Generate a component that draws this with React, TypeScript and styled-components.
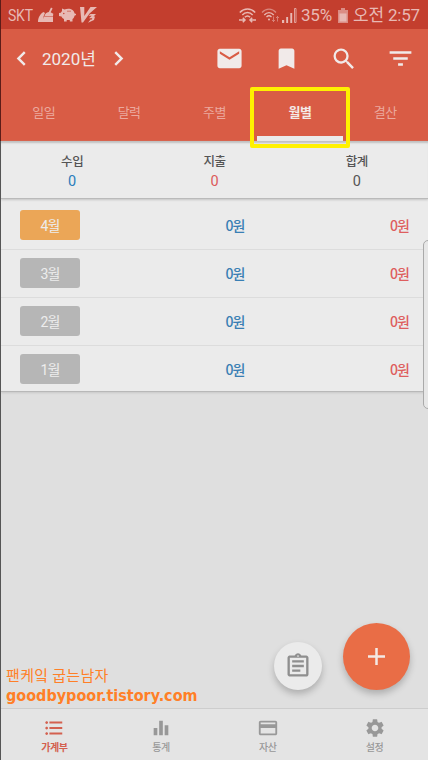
import React from "react";
import styled, { createGlobalStyle } from "styled-components";
import {
  MdMail, MdBookmark, MdSearch, MdFilterList, MdChevronLeft, MdChevronRight,
  MdFormatListBulleted, MdEqualizer, MdCreditCard, MdSettings, MdOutlineAssignment,
} from "react-icons/md";

const Global = createGlobalStyle`
  *, *::before, *::after { box-sizing: border-box; }
  body { margin: 0; background: #e0e0e0; }
`;

const Screen = styled.div`
  position: relative;
  width: 428px;
  height: 760px;
  overflow: hidden;
  display: flex;
  flex-direction: column;
  padding-left: 1px;
  background: #dfdfdf;
  font-family: Roboto, "Noto Sans CJK KR", sans-serif;
`;

const LeftEdge = styled.div`
  position: absolute;
  inset: 0 auto 0 0;
  width: 1px;
  background: linear-gradient(#5c1c18 0 141px, #555 141px);
  z-index: 5;
`;

const StatusBar = styled.header`
  flex: none;
  height: 29px;
  display: flex;
  justify-content: space-between;
  padding: 0 9px 0 7px;
  background: #c33e2e;
  color: #e8b9b4;
`;

const StatusGroup = styled.div`
  display: flex;
  align-items: center;
`;

const StatusText = styled.span<{ $width: number; $gap: number }>`
  font-size: 17px;
  line-height: 30px;
  font-weight: 400;
  width: ${(p) => p.$width}px;
  margin-left: ${(p) => p.$gap}px;
  letter-spacing: -0.2px;
  white-space: nowrap;
`;

const Condensed = styled.span`
  display: inline-block;
  transform: scaleX(0.82);
  transform-origin: left;
`;

const Glyph = styled.svg<{ $gap: number }>`
  display: block;
  flex: none;
  margin-left: ${(p) => p.$gap}px;
  margin-top: 1px;
`;

const AppBar = styled.div`
  flex: none;
  height: 59px;
  display: flex;
  justify-content: space-between;
  align-items: center;
  padding: 0 15px 0 6px;
  background: #d95c45;
  color: #f1eae9;
`;

const YearPicker = styled.div`
  display: flex;
  align-items: center;
  svg { display: block; }
`;

const Year = styled.span`
  width: 54px;
  margin: 1px 8px 0 6px;
  font-size: 17px;
  line-height: 24px;
  white-space: nowrap;
`;

const Actions = styled.div`
  display: grid;
  grid-template-columns: repeat(4, 57px);
  justify-items: center;
  align-items: center;
  margin-right: -16px;
  svg { display: block; }
`;

const Tabs = styled.nav`
  flex: none;
  height: 53px;
  display: grid;
  grid-template-columns: repeat(5, 1fr);
  background: #d95c45;
  position: relative;
`;

const Tab = styled.div<{ $active?: boolean }>`
  display: flex;
  flex-direction: column;
  justify-content: space-between;
  padding-top: 14px;
  text-align: center;
  font-size: 13px;
  line-height: 22px;
  letter-spacing: -0.5px;
  font-weight: ${(p) => (p.$active ? 700 : 400)};
  color: ${(p) => (p.$active ? "#f4e9e7" : "#eba99e")};
`;

const Underline = styled.i`
  height: 5px;
  background: #ebebeb;
`;

const Highlight = styled.div`
  position: absolute;
  left: 249px;
  top: -1px;
  width: 100px;
  height: 61px;
  border: 4px solid #fff100;
  border-radius: 2px;
  z-index: 3;
`;

const Summary = styled.section`
  flex: none;
  height: 58px;
  display: grid;
  grid-template-columns: repeat(3, 1fr);
  padding-top: 11px;
  background: #ebebeb;
  border-bottom: 1px solid #bababa;
  box-shadow: inset 0 3px 2px -1px #c0c0c0, 0 1px 2px #c4c4c4;
  z-index: 1;
`;

const Total = styled.div<{ $color: string }>`
  display: flex;
  flex-direction: column;
  align-items: center;
  b { font-size: 12.5px; line-height: 20px; font-weight: 500; color: #555; letter-spacing: -0.4px; }
  span { font-size: 14.5px; line-height: 20px; color: ${(p) => p.$color}; }
`;

const Months = styled.section`
  flex: none;
  background: #ebebeb;
  padding-top: 3px;
  border-bottom: 1px solid #b8b8b8;
  box-shadow: 0 1px 2px #c8c8c8;
`;

const MonthRow = styled.div`
  height: 48px;
  display: grid;
  grid-template-columns: 60px 1fr 1fr;
  align-items: start;
  padding: 8px 19px 0 19px;
  border-bottom: 1px solid #dcdcdc;
  &:last-child { height: 45px; border-bottom: 0; }
`;

const Chip = styled.div<{ $current: boolean }>`
  height: 30px;
  border-radius: 3px;
  background: ${(p) => (p.$current ? "#eba657" : "#b6b6b6")};
  color: #ededed;
  text-align: center;
  font-size: 14px;
  line-height: 32px;
  letter-spacing: -0.8px;
`;

const Amount = styled.div<{ $color: string }>`
  text-align: right;
  font-family: "Noto Sans CJK KR", sans-serif;
  font-size: 14px;
  line-height: 30px;
  font-weight: 500;
  letter-spacing: -0.9px;
  color: ${(p) => p.$color};
`;

const EdgeHandle = styled.div`
  position: absolute;
  left: 423px;
  top: 240px;
  width: 10px;
  height: 169px;
  border: 1px solid #aaa;
  border-radius: 5px;
  background: #e7e7e7;
  z-index: 4;
`;

const Fab = styled.button<{ $x: number; $y: number; $size: number; $bg: string; $fg: string }>`
  position: absolute;
  left: ${(p) => p.$x}px;
  top: ${(p) => p.$y}px;
  width: ${(p) => p.$size}px;
  height: ${(p) => p.$size}px;
  display: grid;
  place-items: center;
  padding: 0;
  border: 0;
  border-radius: 50%;
  background: ${(p) => p.$bg};
  color: ${(p) => p.$fg};
  box-shadow: 0 4px 7px rgba(0, 0, 0, 0.22);
`;

const Watermark = styled.div`
  margin-top: auto;
  padding: 0 0 1px 5px;
  color: #ff7f27;
  white-space: nowrap;
  p { margin: 0; font: 400 15px/20px "Noto Sans CJK KR", sans-serif; letter-spacing: 0.35px; }
  strong { display: block; font: 700 16px/22px "DejaVu Sans", sans-serif; font-stretch: condensed; }
`;

const BottomNav = styled.nav`
  flex: none;
  height: 52px;
  display: grid;
  grid-template-columns: repeat(4, 1fr);
  background: #e4e4e4;
  border-top: 1px solid #cdcdcd;
`;

const NavItem = styled.div<{ $active?: boolean }>`
  display: flex;
  flex-direction: column;
  align-items: center;
  padding-top: 8px;
  color: ${(p) => (p.$active ? "#d3604f" : "#989898")};
  font-size: 10px;
  line-height: 15px;
  font-weight: ${(p) => (p.$active ? 700 : 500)};
  letter-spacing: -0.4px;
  svg { display: block; margin-bottom: 1px; }
`;

const months = ["4월", "3월", "2월", "1월"];

export default function App() {
  return (
    <>
      <Global />
      <Screen>
        <LeftEdge />
        <StatusBar>
          <StatusGroup>
            <StatusText $width={26} $gap={0}><Condensed>SKT</Condensed></StatusText>
            <Glyph $gap={4} width="16" height="16" viewBox="0 0 16 16" fill="currentColor">
              <path d="M13 .5l1.600 1-2 3.700 2.700 1.500-.3 2.300H6.500c.5-2.300 2-3.600 4.300-4z" />
              <path d="M6 9.500h9V15H6z" />
              <path d="M5.500 5L7 6 5.500 9.500 6.500 15H0c0-4 2-8 5.500-10z" />
            </Glyph>
            <Glyph $gap={5} width="17" height="14" viewBox="0 0 17 14" fill="currentColor">
              <path d="M3 3l0-2.500 2.500 1C8 .3 11.500.3 13.500 2c1.200 1 1.800 2 1.900 3.200L17 6v1l-1.500.7c-.2 1.400-1 2.600-2 3.300v2.500h-2.700V12H7.700v1.500H5V11C3.700 10.300 3 9.600 2.500 8.500L0 8V5l1.800-.3z" />
              <circle cx="4.800" cy="5.500" r=".7" fill="#c33e2e" />
              <path d="M8 3.200h4" stroke="#c33e2e" strokeWidth=".6" />
            </Glyph>
            <Glyph $gap={4} width="17" height="16" viewBox="0 0 17 16" fill="currentColor">
              <path d="M0 0h4.300v9L10.500 0H17L9.500 6.500 3 15.500H1.500z" />
              <path d="M10.500 7H16l-2.500 2.500H15L14 13l-6 2.700 2.500-3.200h1.300l.5-1.300H9l2.700-2.500H8.500z" />
            </Glyph>
          </StatusGroup>
          <StatusGroup>
            <Glyph $gap={0} width="17" height="15" viewBox="0 0 17 15" fill="none" stroke="currentColor" strokeWidth="1.500">
              <path d="M.8 4.500c4.500-4.600 11-4.600 15.400 0M3.300 7c3-3.300 7.400-3.300 10.400 0M5.800 9.200c1.600-1.500 3.800-1.500 5.400 0M0 12h6M3.800 9.800L6 12l-2.200 2.200M17 12h-6M13.200 9.800L11 12l2.200 2.200" />
            </Glyph>
            <Glyph $gap={5} width="19" height="15" viewBox="0 0 19 15" fill="none" stroke="currentColor" strokeWidth="1.300">
              <path d="M1 4.500c4-4.600 10-4.600 14 0" opacity=".6" />
              <path d="M3.300 7c2.700-3.200 6.700-3.200 9.400 0M5.500 9c1.500-1.500 3.500-1.500 5 0" />
              <circle cx="8" cy="11.500" r="1" fill="currentColor" stroke="none" />
              <path d="M12.500 8.500v5M11 12l1.500 1.500L14 12M16.500 13.500v-5M15 10l1.500-1.500L18 10" strokeWidth=".9" opacity=".6" />
            </Glyph>
            <Glyph $gap={2} width="15" height="15" viewBox="0 0 15 15" fill="currentColor">
              <path d="M0 12h2.200v3H0zM4.200 9h1.900v6H4.200zM8.300 5h1.900v10H8.300z" />
              <path d="M12.500.5H14v14h-1.500z" fill="none" stroke="currentColor" strokeWidth=".8" />
            </Glyph>
            <StatusText $width={32} $gap={4}>35%</StatusText>
            <Glyph $gap={5} width="10" height="15" viewBox="0 0 10 15" fill="currentColor">
              <path d="M3 0h4v2h3v13H0V2h3z" opacity=".65" />
              <path d="M1.500 5.500h7v8h-7z" />
            </Glyph>
            <StatusText $width={66} $gap={5}>오전 2:57</StatusText>
          </StatusGroup>
        </StatusBar>
        <AppBar>
          <YearPicker>
            <MdChevronLeft size={29} />
            <Year>2020년</Year>
            <MdChevronRight size={29} />
          </YearPicker>
          <Actions>
            <MdMail size={29} /><MdBookmark size={27} /><MdSearch size={28} /><MdFilterList size={29} />
          </Actions>
        </AppBar>
        <Tabs>
          <Tab>일일</Tab>
          <Tab>달력</Tab>
          <Tab>주별</Tab>
          <Tab $active>월별<Underline /></Tab>
          <Tab>결산</Tab>
          <Highlight />
        </Tabs>
        <Summary>
          <Total $color="#2a7dbb"><b>수입</b><span>0</span></Total>
          <Total $color="#dc5a5a"><b>지출</b><span>0</span></Total>
          <Total $color="#555"><b>합계</b><span>0</span></Total>
        </Summary>
        <Months>
          {months.map((month, i) => (
            <MonthRow key={month}>
              <Chip $current={i === 0}>{month}</Chip>
              <Amount $color="#397fb4">0원</Amount>
              <Amount $color="#de5e5e">0원</Amount>
            </MonthRow>
          ))}
        </Months>
        <EdgeHandle />
        <Fab $x={274} $y={642} $size={48} $bg="#ebebeb" $fg="#8f8f8f"><MdOutlineAssignment size={28} /></Fab>
        <Fab $x={343} $y={623} $size={67} $bg="#e96d46" $fg="#f3e9e5">
          <svg width="17" height="17" viewBox="0 0 17 17" stroke="currentColor" strokeWidth="2.500"><path d="M8.500 0v17M0 8.500h17" /></svg>
        </Fab>
        <Watermark>
          <p>팬케잌 굽는남자</p>
          <strong>goodbypoor.tistory.com</strong>
        </Watermark>
        <BottomNav>
          <NavItem $active><MdFormatListBulleted size={22} />가계부</NavItem>
          <NavItem><MdEqualizer size={22} />통계</NavItem>
          <NavItem><MdCreditCard size={22} />자산</NavItem>
          <NavItem><MdSettings size={22} />설정</NavItem>
        </BottomNav>
      </Screen>
    </>
  );
}
